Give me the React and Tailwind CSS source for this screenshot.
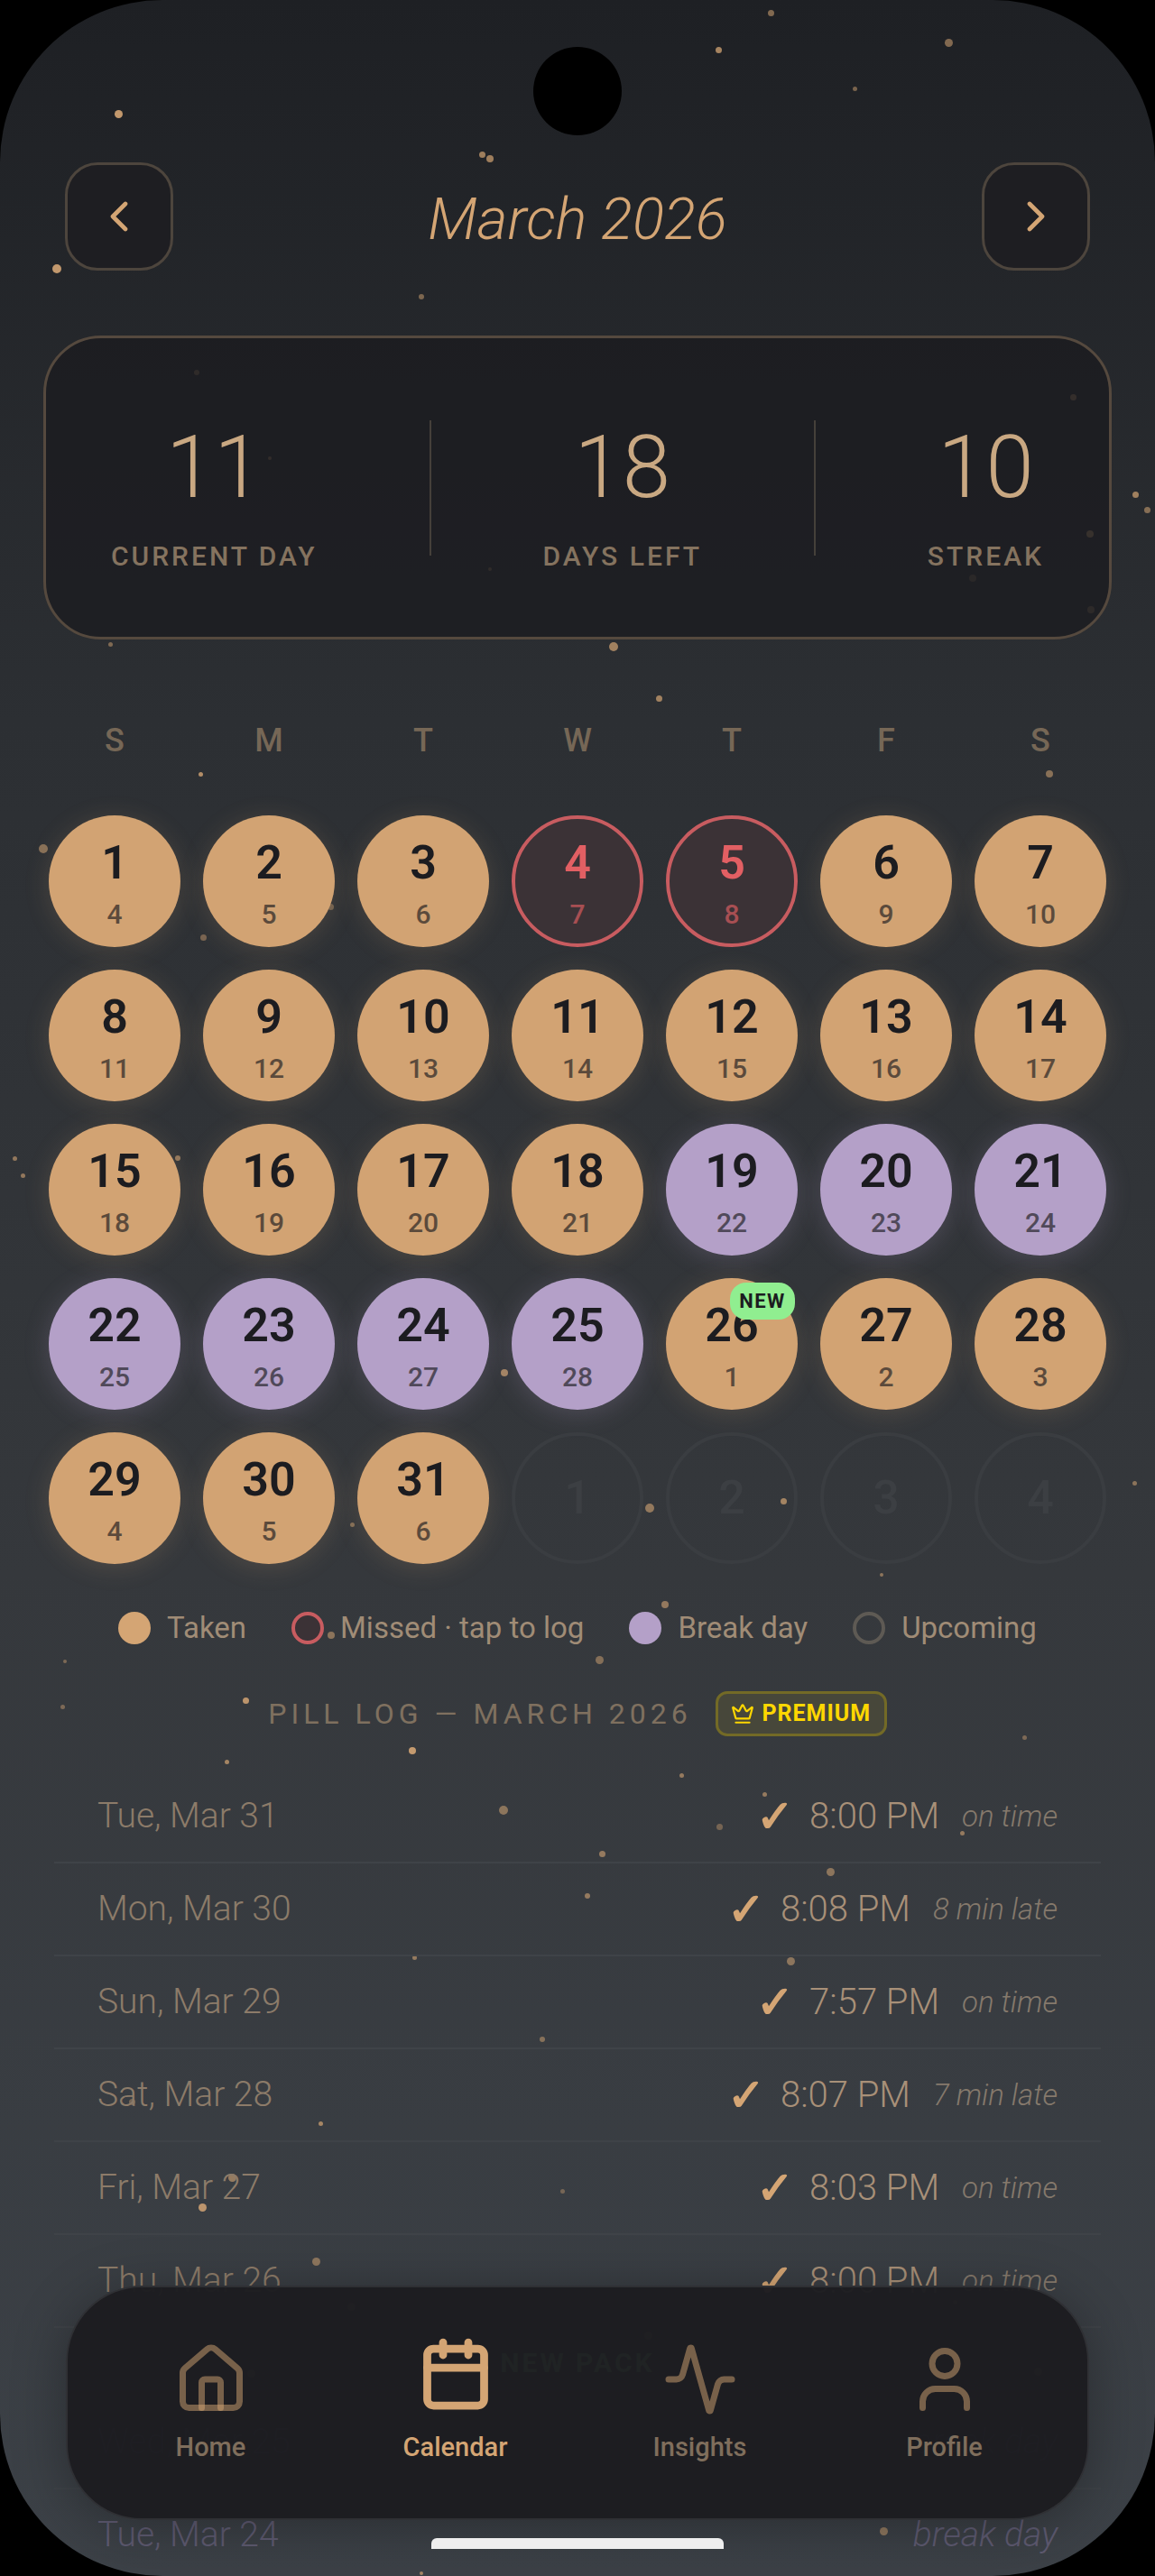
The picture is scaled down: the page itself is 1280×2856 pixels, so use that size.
import { Calendar, ChevronLeft, ChevronRight, Crown, Activity, House, User } from 'lucide-react'

const weekdays = ['S', 'M', 'T', 'W', 'T', 'F', 'S']

// x, y, size, opacity
const particles = [
  [854, 14, 7, 0.55], [1051, 47, 9, 0.55], [796, 55, 7, 0.75], [947, 98, 5, 0.5], [131, 126, 9, 0.9],
  [534, 171, 7, 0.7], [543, 176, 8, 0.7], [63, 298, 10, 0.9], [467, 329, 6, 0.5], [218, 413, 6, 0.35],
  [1189, 440, 7, 0.45], [299, 508, 4, 0.4], [1258, 548, 7, 0.7], [1271, 565, 7, 0.55], [1208, 592, 8, 0.5],
  [1078, 641, 8, 0.25], [1209, 676, 8, 0.3], [543, 631, 4, 0.35], [122, 714, 5, 0.5], [680, 717, 10, 0.7],
  [730, 774, 7, 0.7], [222, 858, 5, 0.8], [1163, 858, 8, 0.55], [48, 941, 10, 0.55], [225, 1039, 7, 0.45],
  [366, 1005, 7, 0.4], [16, 1284, 5, 0.6], [25, 1303, 5, 0.6], [197, 1284, 6, 0.6], [559, 1522, 8, 0.7],
  [720, 1672, 10, 0.6], [868, 1664, 7, 0.7], [1257, 1644, 5, 0.55], [977, 1746, 4, 0.55], [737, 1779, 8, 0.6],
  [390, 1690, 5, 0.5], [367, 1813, 8, 0.55], [72, 1842, 4, 0.45], [664, 1840, 9, 0.5], [272, 1885, 7, 0.85],
  [69, 1892, 5, 0.45], [1135, 1926, 5, 0.45], [457, 1941, 8, 0.9], [251, 1953, 5, 0.7], [755, 1968, 5, 0.6],
  [847, 1989, 5, 0.6], [558, 2007, 10, 0.55], [797, 2025, 7, 0.4], [1066, 2032, 5, 0.6], [667, 2055, 7, 0.6],
  [920, 2075, 9, 0.55], [651, 2102, 6, 0.6], [876, 2174, 9, 0.55], [459, 2170, 5, 0.6], [601, 2261, 6, 0.5],
  [355, 2354, 5, 0.7], [146, 2330, 7, 0.4], [257, 2414, 9, 0.6], [224, 2447, 9, 0.85], [623, 2429, 5, 0.4],
  [350, 2507, 9, 0.55], [389, 2557, 9, 0.5], [718, 2589, 9, 0.5], [1150, 2629, 9, 0.5], [278, 2631, 9, 0.5],
  [1058, 2552, 5, 0.5], [979, 2806, 9, 0.55], [467, 2853, 4, 0.7],
]

const logRows = [
  { date: 'Tue, Mar 31', time: '8:00 PM', note: 'on time' },
  { date: 'Mon, Mar 30', time: '8:08 PM', note: '8 min late' },
  { date: 'Sun, Mar 29', time: '7:57 PM', note: 'on time' },
  { date: 'Sat, Mar 28', time: '8:07 PM', note: '7 min late' },
  { date: 'Fri, Mar 27', time: '8:03 PM', note: 'on time' },
  { date: 'Thu, Mar 26', time: '8:00 PM', note: 'on time' },
]

const getDayKind = (day) => {
  if (day === 4 || day === 5) return 'missed'
  if (day >= 19 && day <= 25) return 'break'
  return 'taken'
}

const DayCircle = ({ day }) => {
  const kind = getDayKind(day)
  const sub = day <= 25 ? day + 3 : day - 25
  const shell = {
    taken: 'pt-[23px] bg-[#d2a373] text-[#1c1c20] shadow-[0_4px_28px_rgba(212,165,116,0.18)]',
    break: 'pt-[23px] bg-[#b4a0c8] text-[#1c1c20] shadow-[0_4px_28px_rgba(180,160,200,0.22)]',
    missed: 'pt-[19px] border-4 border-[#c85c60] bg-[#3b3236] text-[#e25f63]',
  }[kind]

  return (
    <div className={`relative flex h-[146px] w-[146px] flex-col items-center rounded-full ${shell}`}>
      <span className="text-[52px] leading-[60px] font-semibold">{day}</span>
      <span className="mt-[9px] text-[30px] leading-[36px] font-medium opacity-65">{sub}</span>
      {day === 26 && (
        <span className="absolute top-[5px] right-[3px] flex h-[41px] w-[72px] items-center justify-center rounded-[18px] bg-[#90ee90] text-[22px] font-bold tracking-[1.5px] text-[#1c1c20]">
          NEW
        </span>
      )}
    </div>
  )
}

const Stat = ({ value, label }) => (
  <div className="flex translate-y-[7px] flex-col items-center">
    <span className="text-[96px] leading-[112px] font-light text-[#c9a882]">{value}</span>
    <span className="mt-[26px] text-[30px] leading-[34px] font-medium tracking-[3px] text-[#85735f]">{label}</span>
  </div>
)

const LegendItem = ({ dot, label }) => (
  <div className="flex items-center gap-[18px]">
    <span className={`h-[36px] w-[36px] rounded-full ${dot}`} />
    <span className="text-[33px] leading-[40px] text-[#a08c76]">{label}</span>
  </div>
)

const NavItem = ({ icon: Icon, label, active }) => (
  <div className="flex flex-col items-center">
    <Icon
      size={84}
      strokeWidth={active ? 2.5 : 2}
      className={active ? '-translate-y-1.5 text-[#d4a574]' : 'text-[#d4a574]/50'}
    />
    <span className={`mt-[15px] text-[29px] leading-[36px] font-medium ${active ? 'text-[#d4a574]' : 'text-[#7f6e5c]'}`}>
      {label}
    </span>
  </div>
)

export default function App() {
  return (
    <div className="h-[2856px] w-[1280px] overflow-hidden bg-black font-['Roboto',sans-serif]">
      <div className="relative h-[2856px] w-[1280px] overflow-hidden rounded-[180px] bg-[linear-gradient(180deg,#1e2024_0%,#2c2f33_28%,#35383c_61%,#3c4147_100%)]">
        {/* floating dust */}
        {particles.map(([x, y, size, alpha], i) => (
          <span
            key={i}
            className="absolute rounded-full bg-[#d4a574]"
            style={{ left: x - size / 2, top: y - size / 2, width: size, height: size, opacity: alpha }}
          />
        ))}

        <div className="absolute top-[52px] left-[591px] h-[98px] w-[98px] rounded-full bg-black" />

        <div className="relative pt-[180px]">
          {/* Month header */}
          <div className="flex items-center justify-between px-[72px]">
            <button className="flex h-[120px] w-[120px] items-center justify-center rounded-[36px] border-[3px] border-[#4d453d] bg-[#1e1e22] text-[#d4a574]">
              <ChevronLeft size={56} strokeWidth={2} />
            </button>
            <h1 className="pt-[5px] text-[65px] leading-[80px] font-light text-[#d4a574] italic">March 2026</h1>
            <button className="flex h-[120px] w-[120px] items-center justify-center rounded-[36px] border-[3px] border-[#4d453d] bg-[#1e1e22] text-[#d4a574]">
              <ChevronRight size={56} strokeWidth={2} />
            </button>
          </div>

          {/* Stats */}
          <div className="mx-[48px] mt-[72px] flex h-[337px] items-center justify-between rounded-[64px] border-[3px] border-[#55493e] bg-[#1a1a1e]/70 px-[72px]">
            <Stat value="11" label="CURRENT DAY" />
            <div className="h-[150px] w-[2px] bg-[#45403a]" />
            <Stat value="18" label="DAYS LEFT" />
            <div className="h-[150px] w-[2px] bg-[#45403a]" />
            <Stat value="10" label="STREAK" />
          </div>

          {/* Calendar */}
          <div className="mt-[92px] grid grid-cols-7 gap-x-[25px] px-[54px]">
            {weekdays.map((d, i) => (
              <div key={i} className="text-center text-[36px] leading-[40px] font-medium text-[#766756]">
                {d}
              </div>
            ))}
          </div>
          <div className="mt-[63px] grid grid-cols-7 gap-[25px] px-[54px]">
            {Array.from({ length: 31 }, (_, i) => (
              <DayCircle key={i} day={i + 1} />
            ))}
            {[1, 2, 3, 4].map((d) => (
              <div
                key={d}
                className="flex h-[146px] w-[146px] items-center justify-center rounded-full border-4 border-[#3a3d41] text-[52px] font-medium text-[#3c3f43]"
              >
                {d}
              </div>
            ))}
          </div>

          {/* Legend */}
          <div className="mt-[51px] flex items-center justify-center gap-[50px]">
            <LegendItem dot="bg-[#d4a574]" label="Taken" />
            <LegendItem dot="border-4 border-[#c85c60] bg-[#3b3236]" label="Missed · tap to log" />
            <LegendItem dot="bg-[#b4a0c8]" label="Break day" />
            <LegendItem dot="border-4 border-[#5e5a54]" label="Upcoming" />
          </div>

          {/* Pill log */}
          <div className="mt-[50px] flex items-center justify-center gap-[26px]">
            <span className="text-[32px] leading-[40px] font-normal tracking-[5px] text-[#7f705f]">
              PILL LOG — MARCH 2026
            </span>
            <span className="flex h-[50px] w-[190px] items-center justify-center gap-[8px] rounded-[13px] border-[3px] border-[#736a26] bg-[#47473a] text-[25px] font-bold tracking-[1px] text-[#ffd700]">
              <Crown size={26} strokeWidth={2} />
              PREMIUM
            </span>
          </div>

          <div className="mt-[38px] px-[60px]">
            {logRows.map((row) => (
              <div key={row.date} className="flex h-[103px] items-center justify-between border-b-2 border-[#3f4348] px-[48px]">
                <span className="text-[39px] font-light text-[#8c7b69]">{row.date}</span>
                <div className="flex items-center gap-[25px]">
                  <span className="-mr-[8px] text-[50px] leading-none font-bold text-[#d4a574]">✓</span>
                  <span className="text-[40px] font-light text-[#a89078]">{row.time}</span>
                  <span className="text-[33px] font-light text-[#85796c] italic">{row.note}</span>
                </div>
              </div>
            ))}
            <div className="flex h-[76px] items-center justify-center text-[30px] font-bold tracking-[3px] text-[#90ee90]">
              NEW PACK
            </div>
            {['Wed, Mar 25', 'Tue, Mar 24'].map((date) => (
              <div key={date} className="flex h-[103px] items-center justify-between border-b-2 border-[#3f4348] px-[48px] text-[#5f5b72]">
                <span className="text-[39px] font-light">{date}</span>
                <span className="text-[39px] font-light italic">break day</span>
              </div>
            ))}
          </div>
        </div>

        {/* Bottom nav */}
        <nav className="absolute top-[2534px] left-[73px] grid h-[260px] w-[1134px] grid-cols-4 rounded-[84px] border-2 border-[#2f3034] bg-[#1c1c20]/97 px-[23px] pt-[60px] shadow-[0_8px_60px_rgba(0,0,0,0.3)]">
          <NavItem icon={House} label="Home" />
          <NavItem icon={Calendar} label="Calendar" active />
          <NavItem icon={Activity} label="Insights" />
          <NavItem icon={User} label="Profile" />
        </nav>

        <div className="absolute top-[2814px] left-[478px] h-[12px] w-[324px] rounded-t-md bg-[#eeeeee]" />
      </div>
    </div>
  )
}
